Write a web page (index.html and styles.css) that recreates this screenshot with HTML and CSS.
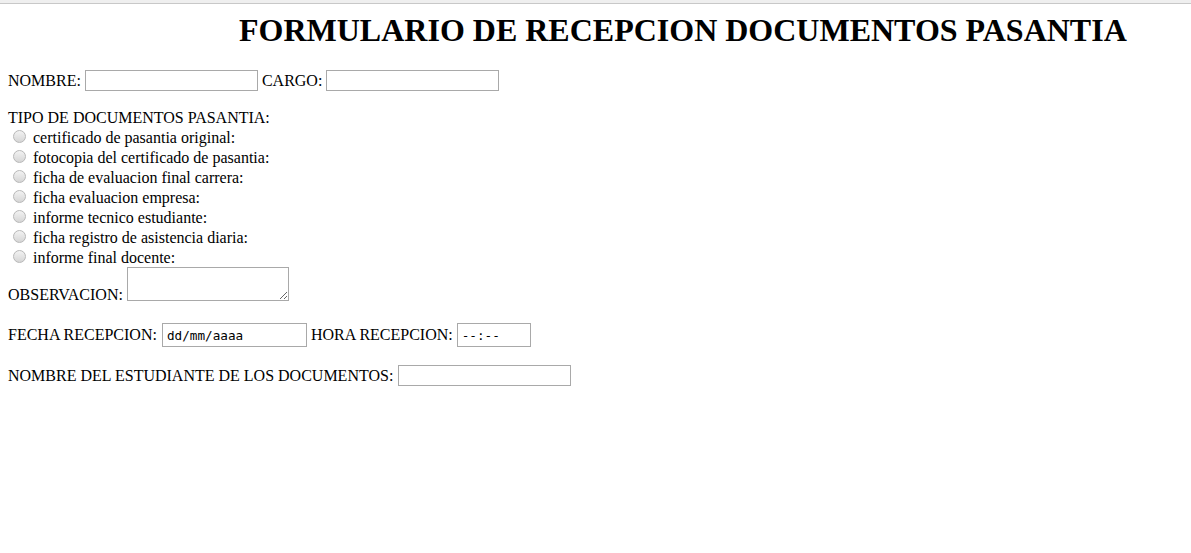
FILE: index.html
```html
<!DOCTYPE html>
<html lang="es">
<head>
<meta charset="utf-8">
<title>Formulario de recepcion documentos pasantia</title>
<link rel="stylesheet" href="styles.css">
</head>
<body>
<div class="topbar"></div>
<main class="page">
  <h1 class="title">FORMULARIO DE RECEPCION DOCUMENTOS PASANTIA</h1>
  <form class="form">
    <div class="row row-first">
      <label class="lbl">NOMBRE:</label>
      <input class="field" type="text">
      <label class="lbl">CARGO:</label>
      <input class="field" type="text">
    </div>

    <div class="group">
      <div class="group-title">TIPO DE DOCUMENTOS PASANTIA:</div>
      <label class="opt"><input class="radio" type="radio" name="doc"><span>certificado de pasantia original:</span></label>
      <label class="opt"><input class="radio" type="radio" name="doc"><span>fotocopia del certificado de pasantia:</span></label>
      <label class="opt"><input class="radio" type="radio" name="doc"><span>ficha de evaluacion final carrera:</span></label>
      <label class="opt"><input class="radio" type="radio" name="doc"><span>ficha evaluacion empresa:</span></label>
      <label class="opt"><input class="radio" type="radio" name="doc"><span>informe tecnico estudiante:</span></label>
      <label class="opt"><input class="radio" type="radio" name="doc"><span>ficha registro de asistencia diaria:</span></label>
      <label class="opt"><input class="radio" type="radio" name="doc"><span>informe final docente:</span></label>
    </div>

    <div class="row row-obs">
      <label class="lbl lbl-bottom">OBSERVACION:</label>
      <textarea class="area"></textarea>
    </div>

    <div class="row row-date">
      <label class="lbl">FECHA RECEPCION:</label>
      <input class="field field-date" type="text" value="dd/mm/aaaa" readonly>
      <label class="lbl">HORA RECEPCION:</label>
      <input class="field field-time" type="text" value="--:--" readonly>
    </div>

    <div class="row row-last">
      <label class="lbl">NOMBRE DEL ESTUDIANTE DE LOS DOCUMENTOS:</label>
      <input class="field" type="text">
    </div>
  </form>
</main>
</body>
</html>
```

FILE: styles.css
```css
html, body {
  margin: 0;
  padding: 0;
  background: #ffffff;
}

body {
  font-family: "Liberation Serif", "Times New Roman", serif;
  font-size: 16px;
  color: #000000;
}

.topbar {
  height: 3px;
  background: #efefef;
  border-bottom: 1px solid #c8c8c8;
}

.page {
  padding: 0 8px;
}

.title {
  margin: 8px 0 0;
  padding-left: 231px;
  font-size: 32px;
  font-weight: bold;
  line-height: 37px;
  white-space: nowrap;
}

.form {
  display: flex;
  flex-direction: column;
}

.row {
  display: flex;
  align-items: center;
  gap: 4px;
}

.row-first {
  margin-top: 21px;
}

.lbl {
  line-height: 18px;
  white-space: nowrap;
}

.field {
  box-sizing: border-box;
  width: 173px;
  height: 21px;
  margin: 0;
  padding: 1px 2px;
  border: 1px solid #a9a9a9;
  background: #ffffff;
  font-family: "Liberation Sans", Arial, sans-serif;
  font-size: 13.33px;
  color: #000000;
  outline: none;
}

.group {
  display: flex;
  flex-direction: column;
  margin-top: 17px;
}

.group-title {
  line-height: 20px;
}

.opt {
  display: flex;
  align-items: center;
  height: 20px;
  line-height: 20px;
}

.radio {
  -webkit-appearance: none;
  appearance: none;
  box-sizing: border-box;
  width: 13px;
  height: 13px;
  margin: 0 7px 4px 5px;
  border-radius: 50%;
  border: 1px solid #b8b8b8;
  background: linear-gradient(#f2f2f2, #d6d6d6);
  flex: none;
}

.row-obs {
  align-items: flex-end;
  margin-top: -1px;
}

.lbl-bottom {
  margin-bottom: -3px;
}

.area {
  box-sizing: border-box;
  width: 162px;
  height: 34px;
  margin: 0;
  padding: 2px;
  border: 1px solid #a9a9a9;
  resize: both;
  font-family: "Liberation Mono", monospace;
  font-size: 13.33px;
  outline: none;
}

.row-date {
  margin-top: 22px;
}

.field-date,
.field-time {
  height: 24px;
  font-family: "DejaVu Sans Mono", "Liberation Mono", monospace;
  font-size: 12.67px;
  padding: 1px 4px;
}

.field-date {
  width: 145px;
  margin-left: 1px;
}

.field-time {
  width: 74px;
}

.row-last {
  margin-top: 18px;
  gap: 5px;
}
```
